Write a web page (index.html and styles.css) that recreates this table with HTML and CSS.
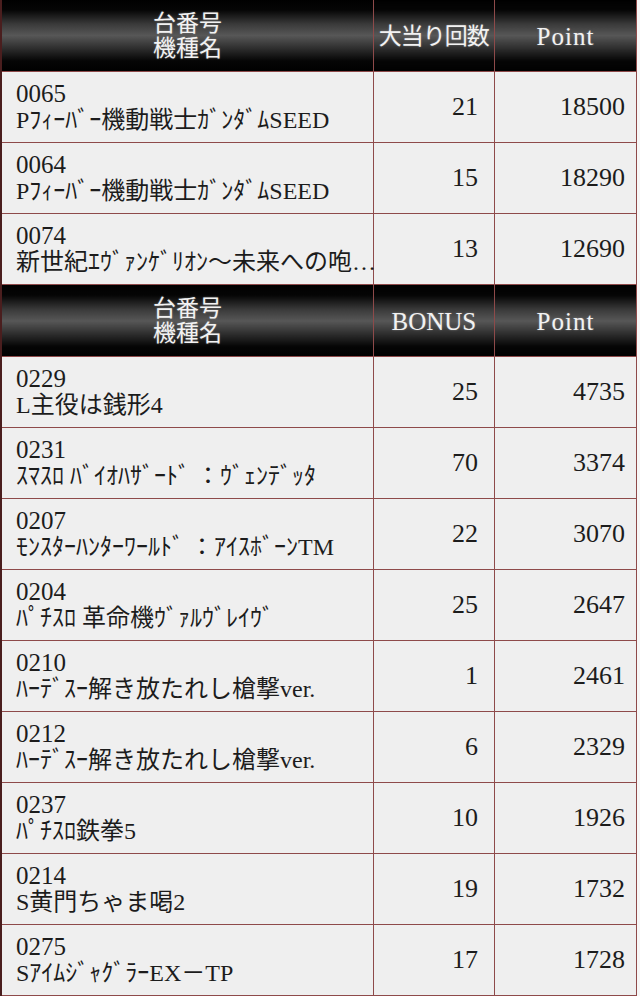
FILE: index.html
```html
<!DOCTYPE html>
<html lang="ja">
<head>
<meta charset="utf-8">
<link rel="stylesheet" href="styles.css">
</head>
<body>
<table class="rank">
  <colgroup><col class="c-name"><col class="c-count"><col class="c-point"></colgroup>
  <tr class="head">
    <th class="h-name">台番号<br>機種名</th>
    <th class="h-count">大当り回数</th>
    <th class="h-latin h-point">Point</th>
  </tr>
  <tr>
    <td class="name"><span class="no">0065</span><span class="title">Pﾌｨｰﾊﾞｰ機動戦士ｶﾞﾝﾀﾞﾑSEED</span></td>
    <td class="num">21</td><td class="num pt">18500</td>
  </tr>
  <tr>
    <td class="name"><span class="no">0064</span><span class="title">Pﾌｨｰﾊﾞｰ機動戦士ｶﾞﾝﾀﾞﾑSEED</span></td>
    <td class="num">15</td><td class="num pt">18290</td>
  </tr>
  <tr>
    <td class="name"><span class="no">0074</span><span class="title">新世紀ｴｳﾞｧﾝｹﾞﾘｵﾝ～未来への咆…</span></td>
    <td class="num">13</td><td class="num pt">12690</td>
  </tr>
  <tr class="head">
    <th class="h-name">台番号<br>機種名</th>
    <th class="h-latin">BONUS</th>
    <th class="h-latin h-point">Point</th>
  </tr>
  <tr>
    <td class="name"><span class="no">0229</span><span class="title">L主役は銭形4</span></td>
    <td class="num">25</td><td class="num pt">4735</td>
  </tr>
  <tr>
    <td class="name"><span class="no">0231</span><span class="title">ｽﾏｽﾛ ﾊﾞｲｵﾊｻﾞｰﾄﾞ ：ｳﾞｪﾝﾃﾞｯﾀ</span></td>
    <td class="num">70</td><td class="num pt">3374</td>
  </tr>
  <tr>
    <td class="name"><span class="no">0207</span><span class="title">ﾓﾝｽﾀｰﾊﾝﾀｰﾜｰﾙﾄﾞ ：ｱｲｽﾎﾞｰﾝTM</span></td>
    <td class="num">22</td><td class="num pt">3070</td>
  </tr>
  <tr>
    <td class="name"><span class="no">0204</span><span class="title">ﾊﾟﾁｽﾛ 革命機ｳﾞｧﾙｳﾞﾚｲｳﾞ</span></td>
    <td class="num">25</td><td class="num pt">2647</td>
  </tr>
  <tr>
    <td class="name"><span class="no">0210</span><span class="title">ﾊｰﾃﾞｽｰ解き放たれし槍撃ver.</span></td>
    <td class="num">1</td><td class="num pt">2461</td>
  </tr>
  <tr>
    <td class="name"><span class="no">0212</span><span class="title">ﾊｰﾃﾞｽｰ解き放たれし槍撃ver.</span></td>
    <td class="num">6</td><td class="num pt">2329</td>
  </tr>
  <tr>
    <td class="name"><span class="no">0237</span><span class="title">ﾊﾟﾁｽﾛ鉄拳5</span></td>
    <td class="num">10</td><td class="num pt">1926</td>
  </tr>
  <tr>
    <td class="name"><span class="no">0214</span><span class="title">S黄門ちゃま喝2</span></td>
    <td class="num">19</td><td class="num pt">1732</td>
  </tr>
  <tr>
    <td class="name"><span class="no">0275</span><span class="title">SｱｲﾑｼﾞｬｸﾞﾗｰEX－TP</span></td>
    <td class="num">17</td><td class="num pt">1728</td>
  </tr>
</table>
</body>
</html>
```
FILE: styles.css
```css
html, body {
  margin: 0;
  padding: 0;
  background: #f7f7f7;
}
body {
  font-family: "Liberation Serif", "Noto Sans CJK JP", serif;
  color: #1c1c1c;
}
.rank {
  border-collapse: collapse;
  table-layout: fixed;
  width: 637px;
  border-left: 2px solid #4a1e1e;
  border-right: 1px solid #6a3434;
}
.c-name { width: 372px; }
.c-count { width: 121px; }
.c-point { width: 142px; }
.rank th, .rank td {
  border: 1px solid #8e4a4a;
  padding: 0;
}
.head th {
  height: 70px;
  background: linear-gradient(to bottom, #000 0%, #050505 14%, #3a3a3a 34%, #575757 50%, #2e2e2e 68%, #050505 86%, #000 100%);
  color: #f2f2f2;
  font-weight: normal;
  font-size: 23px;
  line-height: 25px;
  text-align: center;
  text-shadow: 0 0 2px rgba(160,160,160,0.6);
  border-top: none;
  padding-top: 1px;
}
.head .h-count {
  letter-spacing: -1px;
  white-space: nowrap;
}
.head .h-latin {
  font-size: 25px;
}
.head .h-point {
  letter-spacing: 1px;
}
.rank td {
  height: 70px;
  background: #efefef;
}
.name {
  padding-left: 14px !important;
  vertical-align: middle;
}
.no {
  display: block;
  font-size: 25px;
  line-height: 27px;
}
.title {
  display: block;
  font-size: 24px;
  line-height: 27px;
  white-space: nowrap;
}
.num {
  text-align: right;
  font-size: 26px;
  padding-right: 16px !important;
  vertical-align: middle;
}
.num.pt {
  padding-right: 11px !important;
}
```
